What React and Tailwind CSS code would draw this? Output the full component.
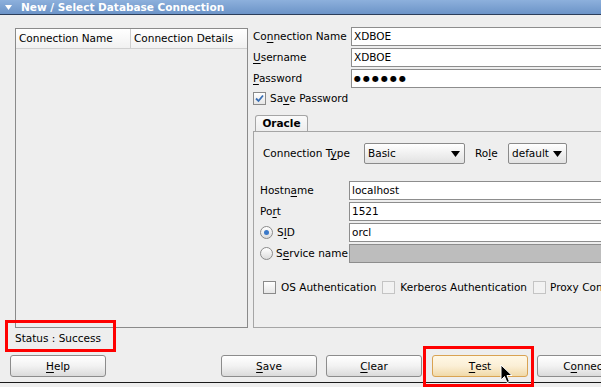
import React from 'react';

const U = ({ children }) => <span className="underline underline-offset-[2px]">{children}</span>;

const Input = ({ value, disabled, className = '' }) => (
  <div
    className={`h-[19px] flex-1 flex items-center pl-[2px] border border-[#8d8d8d] ${
      disabled ? 'bg-[#bdbdbd]' : 'bg-white'
    } ${className}`}
  >
    {value}
  </div>
);

const Checkbox = ({ checked, disabled }) => (
  <div
    className={`w-[13px] h-[13px] shrink-0 flex items-center justify-center border ${
      disabled ? 'border-[#c4c4c4] bg-[#f2f2f2]' : 'border-[#8a8a8a] bg-gradient-to-b from-white to-[#e6e6e6]'
    }`}
  >
    {checked && (
      <svg width="9" height="9" viewBox="0 0 9 9">
        <path d="M1 4.5 L3.5 7 L8 1.5" fill="none" stroke="#3a6fb5" strokeWidth="1.8" />
      </svg>
    )}
  </div>
);

const Radio = ({ checked }) => (
  <div className="w-[13px] h-[13px] shrink-0 rounded-full border border-[#8a8a8a] bg-gradient-to-b from-white to-[#dcdcdc] flex items-center justify-center">
    {checked && <div className="w-[5px] h-[5px] rounded-full bg-[#3a78c8]" />}
  </div>
);

const Combo = ({ value, className = '' }) => (
  <div
    className={`h-[21px] flex items-center justify-between pl-[3px] pr-[4px] border border-[#8a8a8a] rounded-[2px] bg-gradient-to-b from-white to-[#e2e2e2] ${className}`}
  >
    <span>{value}</span>
    <svg width="9" height="6" viewBox="0 0 9 6">
      <path d="M0 0 H9 L4.5 6 Z" fill="#000" />
    </svg>
  </div>
);

const Button = ({ children, active, className = '' }) => (
  <div
    className={`h-[22px] w-[96px] shrink-0 flex items-center justify-center rounded-[3px] border ${
      active
        ? 'border-[#d9a352] bg-gradient-to-b from-[#fff8e6] via-[#fbefd6] to-[#f0d9a8]'
        : 'border-[#8c8c8c] bg-gradient-to-b from-white via-[#f2f2f2] to-[#dadada]'
    } ${className}`}
  >
    {children}
  </div>
);

const FieldRow = ({ label, children }) => (
  <div className="flex items-center h-[19px] mb-[2px]">
    <div className="w-[98px] shrink-0">{label}</div>
    {children}
  </div>
);

const PanelRow = ({ label, children }) => (
  <div className="flex items-center h-[19px] mb-[2px] pl-[6px]">
    <div className="w-[89px] shrink-0 flex items-center">{label}</div>
    {children}
  </div>
);

export default function App() {
  return (
    <div
      className="relative w-[601px] h-[387px] overflow-hidden bg-[#eeeeee] text-[10.5px] text-black leading-none whitespace-nowrap"
      style={{ fontFamily: '"DejaVu Sans", "Liberation Sans", sans-serif' }}
    >
      {/* title bar */}
      <div className="h-[15px] flex items-center bg-gradient-to-b from-[#8db0dc] to-[#6c94c8] border-b border-[#2c3e5a]">
        <svg className="ml-[5px] mr-[9px]" width="7" height="5" viewBox="0 0 7 5">
          <path d="M0 0 H7 L3.5 5 Z" fill="#fff" />
        </svg>
        <span className="text-white font-bold">New / Select Database Connection</span>
      </div>

      <div className="flex mt-[12px] h-[300px]">
        {/* connection list */}
        <div className="ml-[15px] mt-[1px] w-[233px] h-[300px] shrink-0 border border-[#8a8a8a] bg-[#eeeeee]">
          <div className="h-[20px] flex bg-gradient-to-b from-white to-[#f1f1f1] border-b border-[#d0d0d0]">
            <div className="w-[115px] flex items-center pl-[3px] border-r border-[#cfcfcf]">Connection Name</div>
            <div className="flex-1 flex items-center pl-[3px]">Connection Details</div>
          </div>
        </div>

        {/* details */}
        <div className="ml-[5px] w-[380px] shrink-0">
          <FieldRow label={<>Co<U>n</U>nection Name</>}>
            <Input value="XDBOE" />
          </FieldRow>
          <FieldRow label={<><U>U</U>sername</>}>
            <Input value="XDBOE" />
          </FieldRow>
          <FieldRow label={<><U>P</U>assword</>}>
            <Input value={<span className="tracking-[2px] text-[8px]">●●●●●●</span>} />
          </FieldRow>

          <div className="flex items-center gap-[4px] mt-[4px] h-[13px]">
            <Checkbox checked />
            <span>Sa<U>v</U>e Password</span>
          </div>

          {/* tab */}
          <div className="mt-[10px] ml-[2px] w-[53px] h-[16px] flex items-center justify-center border border-b-0 border-[#a5a5a5] rounded-t-[3px] bg-gradient-to-b from-[#fafafa] to-[#eeeeee] font-bold">
            Oracle
          </div>
          <div className="h-[197px] border border-[#a5a5a5] pt-[11px]">
            <div className="flex items-center h-[21px] pl-[9px]">
              <span className="w-[101px] shrink-0">Connection T<U>y</U>pe</span>
              <Combo value="Basic" className="w-[101px]" />
              <span className="ml-[10px] w-[33px]">Ro<U>l</U>e</span>
              <Combo value="default" className="w-[59px]" />
            </div>

            <div className="mt-[17px]">
              <PanelRow label={<>Hostn<U>a</U>me</>}>
                <Input value="localhost" />
              </PanelRow>
              <PanelRow label={<>Po<U>r</U>t</>}>
                <Input value="1521" />
              </PanelRow>
              <PanelRow
                label={
                  <span className="flex items-center gap-[4px]">
                    <Radio checked />
                    <span>S<U>I</U>D</span>
                  </span>
                }
              >
                <Input value="orcl" />
              </PanelRow>
              <PanelRow
                label={
                  <span className="flex items-center gap-[3px]">
                    <Radio />
                    <span>S<U>e</U>rvice name</span>
                  </span>
                }
              >
                <Input disabled />
              </PanelRow>
            </div>

            <div className="flex items-center mt-[18px] pl-[9px] h-[13px]">
              <Checkbox />
              <span className="ml-[5px]">OS Authentication</span>
              <span className="ml-[6px]"><Checkbox disabled /></span>
              <span className="ml-[5px]">Kerberos Authentication</span>
              <span className="ml-[6px]"><Checkbox disabled /></span>
              <span className="ml-[4px]">Proxy Connection</span>
            </div>
          </div>
        </div>
      </div>

      {/* status */}
      <div className="h-[20px] mt-[1px] flex items-center pl-[15px]">Status : Success</div>

      {/* buttons */}
      <div className="flex items-center mt-[7px] h-[22px]">
        <Button className="ml-[10px]"><U>H</U>elp</Button>
        <Button className="ml-[115px]"><U>S</U>ave</Button>
        <Button className="ml-[9px]"><U>C</U>lear</Button>
        <Button active className="ml-[10px]"><U>T</U>est</Button>
        <Button className="ml-[9px]">C<U>o</U>nnect</Button>
      </div>

      <div className="mt-[5px] h-[1px] bg-[#1a1a1a]" />

      {/* annotations */}
      <div className="absolute left-[5px] top-[320px] w-[111px] h-[32px] border-[3px] border-[#ff0000]" />
      <div className="absolute left-[423px] top-[346px] w-[111px] h-[41px] border-[3px] border-[#ff0000]" />

      {/* cursor */}
      <svg className="absolute left-[500px] top-[364px]" width="13" height="20" viewBox="0 0 13 20">
        <path d="M1 1 L1 16 L4.5 12.5 L7 18.5 L9.5 17.5 L7 11.5 L12 11.5 Z" fill="#000" stroke="#fff" strokeWidth="1" />
      </svg>
    </div>
  );
}
